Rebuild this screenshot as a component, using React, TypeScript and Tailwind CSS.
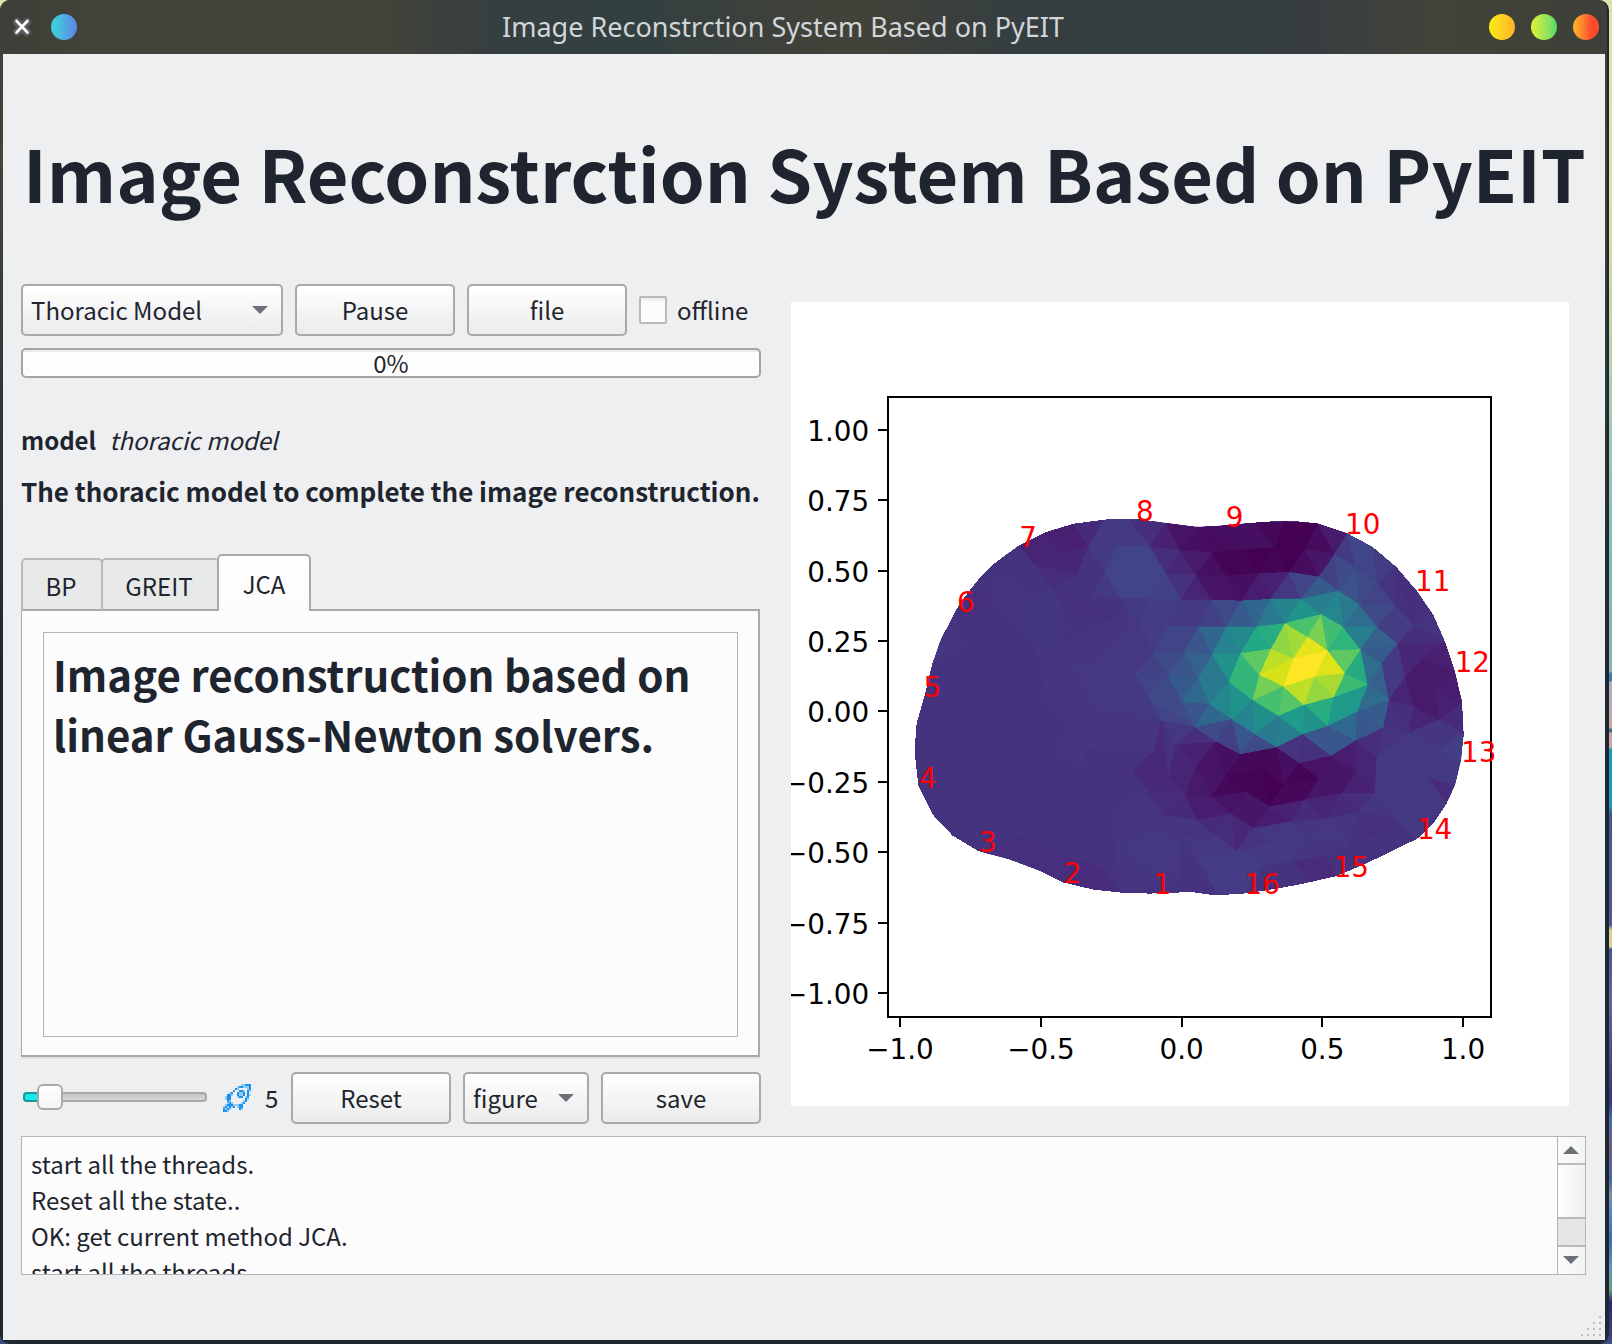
import React from "react";

const UI = "font-['Noto_Sans_CJK_SC','Noto_Sans',sans-serif]";

/* ---------- viridis colour map ---------- */

const VIRIDIS = [
  "440154", "471365", "482475", "463480", "414487", "3b528b", "355f8d",
  "2f6c8e", "2a788e", "25848e", "21918c", "1e9c89", "22a884", "2fb47c",
  "44bf70", "5ec962", "7ad151", "9bd93c", "bddf26", "dfe318", "fde725",
];

function viridis(value: number): string {
  const pos = Math.max(0, Math.min(100, value)) / 5;
  const lo = Math.floor(pos);
  const hi = Math.min(20, lo + 1);
  const t = pos - lo;
  const channel = (hex: string, i: number) => parseInt(hex.slice(i * 2, i * 2 + 2), 16);
  const mix = [0, 1, 2].map((i) =>
    Math.round(channel(VIRIDIS[lo], i) * (1 - t) + channel(VIRIDIS[hi], i) * t)
  );
  return `rgb(${mix.join(",")})`;
}

/* ---------- finite element mesh ---------- */

const OUTLINE =
  "1151.7,521 1136.7,519 1110,519 1074,523.6 1046.7,531.8 1019,545.4 994,563.6 978,580 966.7,594.3 955.7,610.4 940.7,640 931.7,665.7 926,690.7 916.7,722.9 915,744.3 915.3,758.6 918.3,785.4 932.7,814.6 952.3,835.4 978,851 1008.3,859 1036.7,869.6 1063.3,882.5 1093.3,889.6 1120,892.5 1150,893.6 1191.7,892 1210,894.7 1226,894.7 1246.7,893.3 1276.7,888.7 1303.3,883.7 1336.7,876 1366.7,863.3 1417.3,838.7 1433.3,823.3 1446,804.7 1455,785 1461,760 1463.7,735 1462,700 1461.7,700 1455,671.7 1445,641.7 1433.3,615 1416.7,590.7 1396,566.7 1372.3,546.7 1347.3,533.3 1317.7,523.3 1296.7,521.3 1273,521.3 1253.3,522.7 1216.7,526 1200,526.7 1195,526.7 1166,523";

/* Coarse patches on the left lobe: [value, points] */
const LEFT: [number, string][] = [
  [15.2, "765,750 850,745 1000,670 1100,610 1200,690 1200,960 1120,1040 920,1030 900,1090 830,1035 870,965 775,890 800,840"],
  [15.8, "880,800 965,780 1050,680 1150,690 1120,765 1065,820 1000,850 1040,925 960,940"],
  [9, "800,425 882,402 925,467 838,485"],
  [10, "717,463 800,425 838,485 765,520"],
  [11, "838,485 925,467 890,545 765,520"],
  [12, "882,402 970,393 925,467"],
  [12.5, "765,520 890,545 820,585"],
  [17, "970,393 990,389 1070,389 1110,467 1012,462 925,467"],
  [14, "1070,389 1157,399 1200,403 1110,467"],
  [17, "925,467 1012,462 975,535"],
  [20, "1012,462 1110,467 1157,540 1100,610 1020,610 975,535"],
  [17, "975,535 1020,610 935,608"],
  [17, "1020,610 1100,610 1150,690 1065,680"],
  [18, "1157,540 1200,600 1200,690 1150,690 1100,610"],
  [18, "1120,765 1150,690 1200,690 1200,765"],
  [18, "1065,820 1120,765 1165,830"],
  [20, "1065,820 1165,830 1105,890"],
  [18, "1105,890 1142,955 1200,960 1200,880 1165,830"],
  [17, "1000,850 1065,820 1105,890 1142,955 1040,925"],
  [15, "1142,955 1200,960 1200,1020 1185,1020"],
  [12, "1142,955 1185,1020 1120,1040"],
  [11.5, "1055,1095 1120,1040 1185,1020 1200,1110 1165,1110 1110,1155"],
  [10.5, "1110,1155 1165,1110 1200,1150 1200,1160"],
  [7, "1165,1110 1200,1080 1200,1135"],
  [15.4, "1035,1180 1085,1160 1200,1255 1200,1400 1020,1435 1000,1240"],
  [16.4, "1040,1305 1120,1250 1200,1290 1175,1380 1065,1360"],
  [15.3, "480,728 530,665 550,750 455,800"],
  [13.8, "550,620 600,585 635,625 560,660"],
  [15.3, "640,545 700,570 700,670 635,620"],
  [15.6, "700,570 757,610 820,585 860,650 850,745 765,750 697,670"],
  [14.2, "820,585 935,608 1000,670 860,680"],
  [13.8, "600,1325 720,1275 850,1330 960,1360 1020,1435 850,1407 770,1371"],
  [12.8, "850,1407 870,1335 960,1360 1020,1435 940,1427"],
];

/* Vertices of the refined region */
const V: Record<string, [number, number]> = {
  a0: [-30, 62], a1: [78, 69], a2: [180, 80], a3: [340, 68], a4: [435, 64], a5: [533, 70], a6: [622, 100],
  a7: [697, 140], a8: [768, 200], a9: [830, 272], a10: [880, 345], a11: [915, 425], a12: [945, 515], a13: [965, 608],
  b0: [30, 140], b1: [120, 150], b2: [215, 158], b3: [310, 148], b4: [405, 143], b5: [495, 147], b6: [583, 163], b7: [648, 203],
  c0: [78, 220], c1: [167, 225], c2: [260, 228], c3: [357, 220], c4: [447, 216], c5: [537, 230], c6: [596, 273], c7: [657, 313],
  r1: [712, 250], r2: [765, 318], s2: [971, 700],
  d0: [30, 297], d1: [123, 300], d2: [213, 300], d3: [305, 302], d4: [392, 297], d5: [482, 297],
  e0: [80, 378], e1: [175, 380], e2: [258, 380], e3: [350, 380], e4: [435, 370], e5: [543, 343], e6: [608, 380], e7: [710, 380], e8: [820, 377],
  f0: [40, 458], f1: [132, 458], f2: [217, 463], f3: [302, 460], f4: [393, 447], f5: [503, 411], f6: [563, 452], f7: [662, 448], f8: [773, 432],
  g0: [85, 528], g1: [175, 535], g2: [267, 545], g3: [358, 525], g4: [460, 475], g5: [525, 530], g6: [615, 520], g7: [725, 490], g8: [795, 533], g9: [850, 473],
  h0: [25, 592], h1: [127, 607], h2: [208, 612], h3: [430, 560], h5: [581, 592], h7: [683, 555],
  i1: [65, 662], i2: [165, 682], i3: [275, 658], i4: [338, 601], i5: [415, 648], i6: [492, 615], i7: [563, 678], i8: [652, 635],
  i9: [747, 600], i10: [730, 683], i11: [823, 622], i12: [885, 568], i13: [897, 660], i14: [807, 698],
  j1: [108, 735], j2: [228, 725], j3: [302, 763], j4: [342, 702], j5: [410, 742], j6: [487, 703], j7: [573, 768], j8: [647, 722], j9: [710, 775],
  k1: [85, 830], k2: [172, 795], k3: [257, 828], k4: [367, 808], k5: [478, 790], k6: [430, 853], k7: [537, 837], k8: [650, 817], k9: [705, 880],
  l0: [22, 878], l1: [135, 885], l2: [215, 890], l3: [320, 875], l4: [388, 920], l5: [493, 900], l6: [605, 880],
  m0: [70, 945], m1: [172, 960], m2: [272, 940], m3: [340, 985], m4: [450, 965], m5: [555, 957], m6: [655, 938],
  n1: [115, 1010], n2: [218, 1000], n3: [290, 1052], n4: [395, 1030], n5: [503, 1008], n6: [625, 1030], n7: [768, 955],
  p1: [175, 1080], p2: [235, 1184], p3: [320, 1178], p4: [460, 1085], p5: [510, 1147], p6: [590, 1127], p7: [560, 1065], p8: [370, 1095],
  q1: [770, 840], q2: [865, 830], q3: [830, 1015], q4: [950, 858], q5: [918, 912], q6: [897, 750], q7: [963, 790], q8: [700, 1010],
};

/* Cells of the refined region: vertex names followed by the value */
const CELLS = `
a0 a1 b0 13;a1 b0 b1 9;a1 a2 b1 5;a2 b1 b2 4;a2 b2 b3 3;a2 a3 b3 4;a3 b3 b4 4;a3 a4 b4 2;a4 b4 b5 0;a4 a5 b5 0;a5 b5 b6 3;a5 a6 b6 7;a6 b6 b7 17;a6 a7 b7 21;a7 b7 r1 20;a7 a8 r1 18;a8 r1 r2 15;a8 a9 e8 13;a8 r2 e8 14;a9 a10 e8 14;r1 r2 c7 20;
b0 b1 c0 13;b1 c0 c1 11;b1 b2 c1 7;b2 c1 c2 4;b2 b3 c2 1;b3 c2 c3 1;b3 b4 c3 0;b4 c3 c4 1;b4 b5 c4 0;b5 c4 c5 3;b5 b6 c5 6;b6 c5 c6 19;b6 b7 c6 22;b7 c6 c7 25;b7 c7 r1 22;
c0 d0 d1 19;c0 c1 d1 14;c1 d1 d2 10;c1 c2 d2 6;c2 d2 d3 5;c2 c3 d3 4;c3 d3 d4 8;c3 c4 d4 9;c4 d4 d5 16;c4 c5 d5 20;c5 d5 c6 29;
d0 d1 e0 18;d1 e0 e1 17;d1 d2 e1 17;d2 e1 e2 19;d2 d3 e2 22;d3 e2 e3 29;d3 d4 e3 33;d4 e3 e4 41;d4 d5 e4 45;d5 e4 e5 51;d5 c6 e5 42;c6 e5 e6 46;c6 e6 c7 41;c7 e6 e7 35;c7 r2 e7 22;r2 e7 e8 18;
e0 f0 f1 20;e0 e1 f1 21;e1 f1 f2 27;e1 e2 f2 33;e2 f2 f3 44;e2 e3 f3 47;e3 f3 f4 60;e3 e4 f4 62;e4 f4 g4 83;e4 f5 g4 86;e4 e5 f5 71;e5 f5 f6 80;e5 f6 e6 69;e6 f6 f7 65;e6 e7 f7 43;e7 f7 f8 31;e7 e8 f8 18;e8 f8 a11 13;e8 a10 a11 15;f7 f8 g7 29;f8 g7 g8 17;f8 g8 g9 11;f8 g9 a11 11;g9 a11 a12 9;g8 g9 a12 7;g8 i12 a12 7;i12 a12 a13 8;g8 i11 i12 7;
f0 f1 g0 22;f1 g0 g1 26;f1 f2 g1 31;f2 g1 g2 40;f2 f3 g2 50;f3 g2 g3 66;f3 f4 g3 75;f4 g3 g4 90;f5 f6 g4 96;g4 f6 g5 100;g4 g5 h3 100;g3 g4 h3 94;f6 g5 g6 95;f6 f7 g6 75;f7 g6 h7 61;f7 g7 h7 36;g7 h7 i9 31;g7 g8 i9 17;
g0 h0 h1 22;g0 g1 h1 28;g1 h1 h2 34;g1 g2 h2 41;g2 h2 i3 46;g2 i3 i4 51;g2 g3 i4 66;g3 h3 i4 79;h3 i4 i5 70;h3 i5 i6 73;h3 g5 i6 90;g5 i6 h5 84;g5 g6 h5 87;g6 h5 h7 68;h5 i6 i7 62;h5 i7 i8 54;h5 h7 i8 54;h7 i8 i9 35;
h0 i1 i2 20;h0 h1 i2 22;h1 h2 i2 27;h2 i2 i3 33;i3 i4 j4 44;i4 i5 j4 49;i5 j4 j5 41;i5 j5 j6 43;i5 i6 j6 55;i6 i7 j6 51;i7 j6 j7 27;i7 i8 j8 34;i7 j7 j8 27;i8 j8 i10 27;i8 i9 i10 29;
i1 i2 j1 16;i2 j1 j2 13;i2 i3 j2 22;i3 j2 j3 19;i3 j3 j4 27;j3 j4 j5 23;j5 j6 k5 15;j6 k5 j7 14;i9 i10 i14 14;i9 i11 i14 13;g8 i9 i11 10;i11 i12 i13 7;i11 i13 i14 10;i12 i13 a13 9;i13 a13 s2 12;j8 i10 j9 13;i10 i14 j9 15;
i1 j1 k1 14;j1 k1 k2 11;j1 j2 k2 9;j2 k2 k3 5;j2 j3 k3 4;j3 k3 k4 2;j3 j5 k4 2;j5 k4 k6 2;j5 k5 k6 4;k5 k6 k7 1;k5 j7 k7 5;j7 k7 k8 6;j7 j8 k8 8;j8 k8 j9 10;k8 j9 k9 10;
k1 l0 l1 12;k1 k2 l1 10;k2 l1 l2 7;k2 k3 l2 5;k3 l2 l3 2;k3 k4 l3 1;k4 l3 l4 1;k4 k6 l4 0;k6 l4 l5 2;k6 k7 l5 2;k7 l5 l6 6;k7 k8 l6 6;k8 l6 k9 9;
l0 m0 l1 13;l1 m0 m1 12;l1 l2 m1 8;l2 m1 m2 8;l2 l3 m2 5;l3 m2 m3 6;l3 l4 m3 6;l4 m3 m4 8;l4 l5 m4 9;l5 m4 m5 12;l5 l6 m5 10;l6 m5 m6 12;l6 k9 m6 13;
m0 m1 n1 15.5;m1 n1 n2 15;m1 m2 n2 12;m2 n2 n3 13;m2 m3 n3 11;m3 n3 n4 15;m3 m4 n4 16;m4 n4 n5 16.5;m4 m5 n5 15;m5 m6 n6 15.5;m5 n5 n6 16;
p1 n2 n3 16.5;p1 n3 p8 p3 p2 17.5;n3 n4 p8 17;n4 n5 p4 p8 16.5;n5 n6 p7 p4 15.5;p4 p5 p6 p7 12.5;p1 n1 n2 16;
k9 m6 n7 15.5;m6 n7 n6 14;n6 n7 q8 13;q1 q2 q3 n7 17;j9 q1 n7 k9 16.3;j9 i14 q6 q2 q1 16.5;q2 q4 q5 12.5;q6 q7 q4 q2 17;q6 q7 s2 18.5;i14 i13 s2 q6 15.5;q2 q5 q3 16`
  .split(";")
  .map((row) => row.trim().split(/\s+/))
  .filter((row) => row.length > 3)
  .map((row) => ({
    value: Number(row[row.length - 1]),
    points: row.slice(0, -1).map((name) => V[name].join(",")).join(" "),
  }));

const ELECTRODES: [string, number, number][] = [
  ["1", 1153.6, 893.7], ["2", 1063.7, 883.4], ["3", 979, 852.3], ["4", 918.9, 787.5],
  ["5", 923.6, 697.4], ["6", 957, 612.4], ["7", 1019.2, 546.8], ["8", 1136, 521],
  ["9", 1225.8, 527], ["10", 1345.1, 533.7], ["11", 1415, 590.7], ["12", 1454.7, 671.7],
  ["13", 1461, 761.7], ["14", 1416.9, 838.7], ["15", 1333.7, 876.7], ["16", 1244.5, 893.7],
];

const Y_TICKS: [string, number][] = [
  ["1.00", 430], ["0.75", 500.2], ["0.50", 570.8], ["0.25", 641], ["0.00", 711.2],
  ["−0.25", 781.9], ["−0.50", 852.2], ["−0.75", 922.6], ["−1.00", 993],
];

const X_TICKS: [string, number][] = [
  ["−1.0", 900], ["−0.5", 1041], ["0.0", 1181.7], ["0.5", 1322.3], ["1.0", 1463],
];

function Plot() {
  return (
    <svg
      viewBox="791 302 778 804"
      className="block h-[804px] w-[778px] bg-white font-['DejaVu_Sans',sans-serif] text-[27.8px]"
    >
      <defs>
        <clipPath id="thorax">
          <polygon points={OUTLINE} />
        </clipPath>
      </defs>
      <g shapeRendering="crispEdges">
        <polygon points={OUTLINE} fill={viridis(14.8)} />
        <g clipPath="url(#thorax)">
          <g transform="translate(780 380) scale(0.33333 0.35714)">
            {LEFT.map(([value, points], i) => (
              <polygon key={i} points={points} fill={viridis(value)} />
            ))}
          </g>
          <g transform="translate(1140 500) scale(0.33333)">
            <polygon points="30,140 78,220 30,297 20,297 77,219" fill={viridis(20)} />
            <polygon points="30,297 80,378 40,458 0,370" fill={viridis(17.5)} />
            <polygon points="40,458 85,528 -15,519" fill={viridis(19)} />
            <polygon points="85,528 25,592 -15,519" fill={viridis(20)} />
            <polygon points="25,592 65,662 -40,631" fill={viridis(17)} />
            {CELLS.map((cell, i) => (
              <polygon
                key={i}
                points={cell.points}
                fill={viridis(cell.value)}
                stroke={viridis(cell.value)}
                strokeWidth="0.8"
              />
            ))}
          </g>
        </g>
      </g>
      <rect x="888" y="397" width="603" height="620" fill="none" stroke="#000" strokeWidth="2" />
      {Y_TICKS.map(([label, y]) => (
        <g key={label}>
          <path d={`M878 ${Math.round(y)}H888`} stroke="#000" strokeWidth="2" />
          <text x="869.2" y={y + 11.2} textAnchor="end">{label}</text>
        </g>
      ))}
      {X_TICKS.map(([label, x]) => (
        <g key={label}>
          <path d={`M${Math.round(x)} 1017V1027`} stroke="#000" strokeWidth="2" />
          <text x={x} y="1059" textAnchor="middle">{label}</text>
        </g>
      ))}
      <g fill="#ff0000">
        {ELECTRODES.map(([label, x, y]) => (
          <text key={label} x={x} y={y}>{label}</text>
        ))}
      </g>
    </svg>
  );
}

/* ---------- pixel rocket ---------- */

const ROCKET = [
  ".........mmBBB",
  ".......mBBmmmB",
  "......Bm....mB",
  ".....B..BBm.Bm",
  "...mB..BmmB.B.",
  "..BBm..BmmB.Bm",
  ".mBB...mBB.mB.",
  ".mBB.......Bm.",
  "..Bm......mB..",
  "..mBm....mB...",
  ".mBBBmmmBB....",
  "mBmBmB.mBB....",
  "BmBm....Bm....",
  "BBm...........",
];

function Rocket() {
  return (
    <svg viewBox="0 0 14 14" className="size-7" shapeRendering="crispEdges">
      {ROCKET.flatMap((row, y) =>
        [...row].map((c, x) =>
          c === "." ? null : (
            <rect key={`${x}-${y}`} x={x} y={y} width="1" height="1" fill={c === "B" ? "#1c93ea" : "#8fcbf5"} />
          )
        )
      )}
    </svg>
  );
}

/* ---------- widgets ---------- */

function Caret({ up = false }: { up?: boolean }) {
  return (
    <svg viewBox="0 0 16 8" className={up ? "h-2 w-4 rotate-180" : "h-2 w-4"}>
      <path d="M0 0H16L8 8Z" fill="#6c7078" />
    </svg>
  );
}

function Button({ className, children }: { className: string; children: React.ReactNode }) {
  return (
    <button
      className={`flex h-[52px] shrink-0 items-center rounded-[5px] border-2 border-[#a9a9aa] bg-linear-to-b from-white to-[#ebebec] pb-px ${className}`}
    >
      {children}
    </button>
  );
}

const LOG = ["start all the threads.", "Reset all the state..", "OK: get current method JCA.", "start all the threads."];

export default function App() {
  return (
    <div
      className={`h-[1344px] w-[1612px] overflow-hidden bg-[linear-gradient(#dfe2a8_0,#e3dfa6_200px,#a9cdb0_400px,#7dbdb9_560px,#8fb0b8_672px,#3b7db5_673px,#3b7db5_681px,#a9b0bd_682px,#cba6a6_728px,#39718c_729px,#39718c_732px,#c9a6aa_733px,#c9a6aa_748px,#1c9cc2_749px,#1c9cc2_806px,#41579b_814px,#4c5a99_925px,#e0d092_930px,#dccb92_947px,#45559c_949px,#5d6a9a_1000px,#3f4f8e_1060px,#2b3684_1100px,#4a6cb0_1120px,#6b5c80_1150px,#4668b0_1180px,#7f93a0_1195px,#5b86cc_1210px,#3d6db5_1240px,#6497bd_1270px,#63a277_1290px,#28247e_1302px,#3a5080_1344px)] text-[24px] leading-[36px] text-[#1f252f] ${UI}`}
    >
      <div className="flex h-full w-[1609px] flex-col rounded-[10px] border-r-2 border-[#23282f] bg-[linear-gradient(#3c3e36,#43443a_160px,#2c383b_400px,#1f262e_700px,#20282f)]">
        <header className="flex h-[54px] shrink-0 items-center rounded-t-[10px] bg-[linear-gradient(90deg,#3c3f38_0,#43443a_110px,#43433a_380px,#353e40_500px,#324041_640px,#3d413b_760px,#424239_860px,#353e40_1010px,#333f40_1200px,#363d40_1290px,#42433a_1430px,#3d4038_1600px)] pr-2 pl-3">
          <svg viewBox="0 0 20 20" className="size-5">
            <path d="M5 5L15 15M15 5L5 15" stroke="#5a5b5c" strokeWidth="8" strokeLinecap="round" />
            <path d="M4.5 4L15.5 15.5M15.5 4L4.5 15.5" stroke="#fff" strokeWidth="2.6" strokeLinecap="round" />
          </svg>
          <span className="ml-[19px] size-[26px] rounded-full bg-linear-to-r from-[#34d5d8] to-[#5c84e8]" />
          <h1 className="flex-1 text-center font-['Noto_Sans',sans-serif] text-[27px] text-[#d3d5d8]">
            Image Reconstrction System Based on PyEIT
          </h1>
          <div className="flex gap-4">
            <span className="size-[26px] rounded-full bg-linear-to-r from-[#f9ee08] to-[#ffb02a]" />
            <span className="size-[26px] rounded-full bg-linear-to-r from-[#dff035] to-[#4cdb66]" />
            <span className="size-[26px] rounded-full bg-linear-to-r from-[#ffb62c] to-[#ff4a2c] to-70%" />
          </div>
        </header>

        <main className="relative mr-[2px] mb-1 ml-[3px] flex flex-1 flex-col bg-[#eeeff1] pl-[18px]">
          <h2 className="mt-[66px] h-[104px] pl-[2px] text-[72px] leading-[104px] font-bold whitespace-nowrap">
            Image Reconstrction System Based on PyEIT
          </h2>

          <div className="mt-[60px] flex h-[840px]">
            <section className="flex w-[740px] shrink-0 flex-col">
              <div className="flex items-center gap-3">
                <Button className="w-[262px] justify-between pr-[13px] pl-2">
                  Thoracic Model <Caret />
                </Button>
                <Button className="w-40 justify-center">Pause</Button>
                <Button className="w-40 justify-center">file</Button>
                <label className="flex items-center gap-[10px]">
                  <span className="size-7 rounded-[2px] border-2 border-[#b9babb] bg-linear-to-b from-[#ebebeb] to-[#fcfcfc] to-20%" />
                  <span className="-mt-px">offline</span>
                </label>
              </div>
              <div className="mt-3 flex h-[30px] items-center justify-center rounded-[5px] border-2 border-[#a3a4a5] bg-[linear-gradient(#ececec_2px,#fdfdfd_2px)]">
                0%
              </div>
              <p className="mt-11 flex gap-[13px]">
                <b>model</b>
                <i>thoracic model</i>
              </p>
              <p className="mt-[15px] text-[26px] font-bold tracking-[-0.02px] whitespace-nowrap">
                The thoracic model to complete the image reconstruction.
              </p>

              <div className="mt-[45px] flex h-[57px] w-[739px] items-end">
                <div className="flex h-[53px] w-[82px] items-center justify-center rounded-t-[5px] border-2 border-[#b9babb] border-b-[#a9a9aa] bg-[#e8e9e9] pt-[2px] pr-[2px]">BP</div>
                <div className="-ml-[2px] flex h-[53px] w-[118px] items-center justify-center rounded-t-[5px] border-2 border-r-0 border-[#b9babb] border-b-[#a9a9aa] bg-[#e8e9e9] pt-[2px] pr-1">GREIT</div>
                <div className="z-10 -ml-[2px] flex h-[57px] w-[94px] items-center justify-center rounded-t-[5px] border-2 border-b-0 border-[#a9a9aa] bg-linear-to-b from-white to-[#fcfcfc]">JCA</div>
                <div className="h-[2px] flex-1 bg-[#a9a9aa]" />
              </div>
              <div className="h-[446px] w-[739px] border-r-2 border-b-2 border-l border-[#a9a9aa] bg-[#fcfcfc] pt-[21px] pr-5 pb-[18px] pl-[21px] shadow-[0_2px_0_#e2e3e5]">
                <div className="h-full border border-[#b3b4b5] pt-[11px] pl-[9px] text-[42px] leading-[60px] font-bold whitespace-nowrap">
                  <p>Image reconstruction based on</p>
                  <p>linear Gauss-Newton solvers.</p>
                </div>
              </div>

              <div className="mt-[15px] flex items-center">
                <div className="relative -top-px ml-[2px] h-[26px] w-[184px]">
                  <div className="absolute top-2 left-0 h-[10px] w-full rounded-[4px] border-2 border-[#a9a9aa] bg-linear-to-b from-[#c4c5c5] to-[#d8d9d9]" />
                  <div className="absolute top-2 left-0 h-[10px] w-6 rounded-[4px] border-2 border-[#149a9c] bg-[#18e8ea]" />
                  <div className="absolute top-0 left-[14px] size-[26px] rounded-[6px] border-2 border-[#a9a9aa] bg-linear-to-b from-white to-[#f4f4f4]" />
                </div>
                <span className="-mt-px ml-4"><Rocket /></span>
                <span className="-mt-px ml-[14px] w-[26px]">5</span>
                <Button className="w-40 justify-center">Reset</Button>
                <Button className="ml-3 w-[126px] justify-between pr-[13px] pl-2">
                  figure <Caret />
                </Button>
                <Button className="ml-3 w-40 justify-center">save</Button>
              </div>
            </section>
            <div className="mt-[18px] ml-[30px]">
              <Plot />
            </div>
          </div>

          <div className="mt-3 flex h-[139px] w-[1565px] border border-[#b3b4b5] bg-[#fcfcfc]">
            <div className="flex-1 overflow-hidden pt-[9px] pl-[9px]">
              {LOG.map((line, i) => (
                <p key={i}>{line}</p>
              ))}
            </div>
            <div className="flex w-[28px] flex-col border-l border-[#b3b4b5] bg-[#e6e6e6]">
              <div className="flex h-[26px] items-center justify-center bg-linear-to-r from-[#fcfcfc] to-[#f2f3f3] pr-px">
                <Caret up />
              </div>
              <div className="h-[56px] border-y-2 border-[#bababa] bg-linear-to-r from-[#fdfdfd] to-[#eff1f1]" />
              <div className="flex-1" />
              <div className="flex h-[29px] items-center justify-center border-t-2 border-[#bababa] bg-linear-to-r from-[#fcfcfc] to-[#f2f3f3] pr-px pb-[2px]">
                <Caret />
              </div>
            </div>
          </div>

          <svg viewBox="0 0 20 20" className="absolute right-1 bottom-1 size-5" shapeRendering="crispEdges" fill="#bcbdbe">
            {[0, 1, 2, 3].flatMap((r) =>
              Array.from({ length: r + 1 }, (_, k) => (
                <rect key={`${r}-${k}`} x={18 - k * 6} y={r * 6} width="2" height="2" />
              ))
            )}
          </svg>
        </main>
      </div>
    </div>
  );
}
